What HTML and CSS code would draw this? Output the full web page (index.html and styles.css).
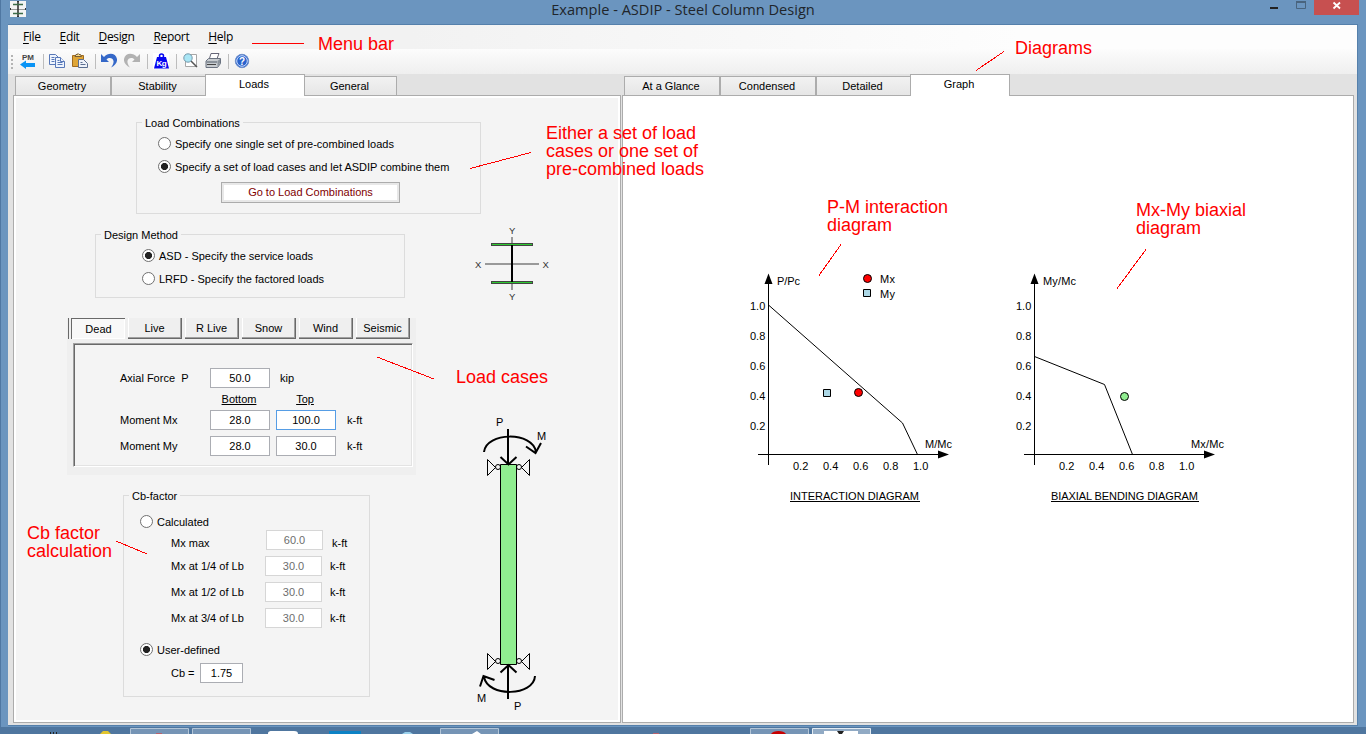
FILE: index.html
```html
<!DOCTYPE html>
<html lang="en">
<head>
<meta charset="utf-8">
<title>Example - ASDIP - Steel Column Design</title>
<link rel="stylesheet" href="styles.css">
</head>
<body>
<div class="window">
  <header class="titlebar">
    <svg class="app-icon" width="16" height="16" viewBox="0 0 16 16"><path fill="#f4f4f4" d="M0 0h16v16H0z"/><path stroke="#999" d="M0 8.5h16"/><path stroke="#333" stroke-width="1.6" d="M8 1v14"/><path stroke="#3d6b48" stroke-width="1.6" d="M3 3.5h10M3 12.5h10"/><path fill="#333" d="M7 0h2v1H7zM7 15h2v1H7zM0 7h1v2H0zM15 7h1v2h-1z"/></svg>
    <h1 class="title">Example - ASDIP - Steel Column Design</h1>
    <div class="controls">
      <svg width="36" height="15" viewBox="0 0 36 15"><path fill="#222" d="M0 7h8v2H0z"/><path fill="none" stroke="#49647e" d="M26.5 1.500h9v7h-9z"/><path fill="#49647e" d="M26 1h10v2H26z"/></svg>
      <div class="close"><svg width="45" height="15" viewBox="0 0 45 15"><path stroke="#fff" stroke-width="1.800" d="M19.500 2.500l6.500 6M26 2.500l-6.500 6"/></svg></div>
    </div>
  </header>
  <div class="client">
    <nav class="menu"><span><u>F</u>ile</span><span><u>E</u>dit</span><span><u>D</u>esign</span><span><u>R</u>eport</span><span><u>H</u>elp</span></nav>
    <div class="toolbar">
      <svg class="grip" width="2" height="16" viewBox="0 0 2 16"><path fill="#b4b4b4" d="M0 1h2v2H0zM0 5h2v2H0zM0 9h2v2H0zM0 13h2v2H0z"/></svg>
      <svg class="tool" viewBox="0 0 16 16"><text class="pm" x="2" y="6.500">PM</text><path fill="#0a94f5" d="M0 11.500l6-4v2.500h9v4H6v2z"/></svg>
      <i class="sep"></i>
      <svg class="tool" viewBox="0 0 16 16"><g fill="#eef4fd" stroke="#5878b8"><path d="M.5 1.500h6l3 3v7h-9z"/><path d="M2.500 4.500h3M2.500 6.500h3M2.500 8.500h3"/><path d="M6.500 4.500h5l4 4v6h-9z"/><path d="M11.500 4.500v4h4M8.500 7.500h2M8.500 9.500h5M8.500 11.500h5"/></g></svg>
      <svg class="tool" viewBox="0 0 16 16"><path fill="#dfa637" stroke="#a06b20" d="M.5 2.500h11v11H.5z"/><path fill="#f7dc8a" stroke="#755b35" d="M3 3.500l1-2h1.500L6 .5l1 1h1.500l1 2z"/><path fill="#eef2fa" stroke="#5c6f91" d="M6.500 6.500h5l4 4v4h-9z"/><path stroke="#5c6f91" d="M8.500 9.500h2M8.500 11.500h5"/></svg>
      <i class="sep"></i>
      <svg class="tool" viewBox="0 0 16 16"><path fill="#3568c8" d="M0 1v8h8L5.500 6.500C8 4 12 5 12.500 8c.3 2.500-1 4.500-2.500 6.500 4-2 6.500-5 6-8.500C15 0 7.500-1 3 4z"/></svg>
      <svg class="tool" viewBox="0 0 16 16"><path fill="#b2b2b2" d="M16 1v8H8l2.500-2.500C8 4 4 5 3.500 8c-.3 2.500 1 4.500 2.500 6.500C2 12.500-.5 9.500 0 6 1 0 8.500-1 13 4z"/></svg>
      <i class="sep"></i>
      <svg class="tool" viewBox="0 0 16 16"><path fill="#fff" d="M0 0h16v16H0z"/><circle cx="8.500" cy="3" r="2" fill="none" stroke="#0505f0" stroke-width="1.500"/><path fill="#0505f0" d="M4 4h9l3 11.500H1z"/><text class="kg" x="3.500" y="12.500">Kg</text></svg>
      <i class="sep"></i>
      <svg class="tool" viewBox="0 0 16 16"><path fill="#fff" stroke="#a7a7a7" d="M3.500 1.500h11v12h-11z"/><path stroke="#555" stroke-width="1.500" d="M9 8l6 6"/><circle cx="6" cy="5" r="4.200" fill="#a9e6f5" stroke="#7798aa"/></svg>
      <svg class="tool" viewBox="0 0 16 16"><path fill="#fff" stroke="#667" d="M6 .5h8L11.500 7H4z"/><path fill="#c8ccd0" stroke="#6a7280" d="M1 8l2.500-2.500h12v5l-3 4H1z"/><path fill="#8a929b" d="M1 8h11v2H1zM12.500 8L15 6v4l-2.500 4z"/><path stroke="#444" d="M2 11.500h9"/></svg>
      <i class="sep"></i>
      <svg class="tool" viewBox="0 0 16 16"><circle cx="8" cy="8" r="6.700" fill="#2a63cc" stroke="#6f8fc9"/><circle cx="8" cy="8" r="5.300" fill="none" stroke="#cfe0ff"/><text class="q" x="5" y="11.500">?</text></svg>
    </div>
    <main class="panes">
      <section class="pane pane-left">
        <div class="tabs"><span class="tab t1">Geometry</span><span class="tab t2">Stability</span><span class="tab active">Loads</span><span class="tab t4">General</span></div>
        <div class="page form">
          <div class="group combos">
            <div class="legend">Load Combinations</div>
            <div class="opt"><i class="radio"></i>Specify one single set of pre-combined loads</div>
            <div class="opt"><i class="radio on"></i>Specify a set of load cases and let ASDIP combine them</div>
            <div class="go">Go to Load Combinations</div>
          </div>
          <div class="lower">
            <div class="fields">
              <div class="group method">
                <div class="legend">Design Method</div>
                <div class="opt"><i class="radio on"></i>ASD - Specify the service loads</div>
                <div class="opt"><i class="radio"></i>LRFD - Specify the factored loads</div>
              </div>
              <div class="cases">
                <div class="casetabs"><span class="case sel">Dead</span><span class="case">Live</span><span class="case">R Live</span><span class="case">Snow</span><span class="case">Wind</span><span class="case">Seismic</span></div>
                <div class="casebox">
                  <div class="row"><span>Axial Force&nbsp; P</span><b class="in">50.0</b><span class="kip">kip</span></div>
                  <div class="row heads"><span></span><u>Bottom</u><u>Top</u></div>
                  <div class="row"><span>Moment Mx</span><b class="in">28.0</b><b class="in focus">100.0</b><span class="unit">k-ft</span></div>
                  <div class="row my"><span>Moment My</span><b class="in">28.0</b><b class="in">30.0</b><span class="unit">k-ft</span></div>
                </div>
              </div>
              <div class="group cb">
                <div class="legend">Cb-factor</div>
                <div class="opt"><i class="radio"></i>Calculated</div>
                <div class="cbrow first"><span>Mx max</span><b class="in off">60.0</b><span>k-ft</span></div>
                <div class="cbrow"><span>Mx at 1/4 of Lb</span><b class="in off">30.0</b><span>k-ft</span></div>
                <div class="cbrow"><span>Mx at 1/2 of Lb</span><b class="in off">30.0</b><span>k-ft</span></div>
                <div class="cbrow"><span>Mx at 3/4 of Lb</span><b class="in off">30.0</b><span>k-ft</span></div>
                <div class="opt user"><i class="radio on"></i>User-defined</div>
                <div class="cbval"><span>Cb =</span><b class="in">1.75</b></div>
              </div>
            </div>
            <div class="figures">
              <svg width="100" height="90" viewBox="465 220 100 90">
                <path stroke="#999" stroke-width="2" d="M512 237v53M485 264h54"/>
                <path fill="#444" d="M491 243h42v3h-42zM491 281h42v3h-42z"/>
                <path fill="#2dc930" d="M492 244h40v1h-40zM492 282h40v1h-40z"/>
                <path stroke="#000" stroke-width="2" d="M512 245v37"/>
                <g class="axis"><text x="509" y="234">Y</text><text x="509" y="299.500">Y</text><text x="475" y="268">X</text><text x="542.500" y="268">X</text></g>
              </svg>
              <svg class="column" width="100" height="310" viewBox="465 405 100 310">
                <path fill="#90ee90" stroke="#000" d="M500.500 464.500h16v200h-16z"/>
                <g fill="none" stroke="#000" stroke-width="2">
                  <path d="M508 429v35M500.500 457l8 7.500 8-7.500"/>
                  <path d="M484 452c2-20 49-21 52 0M526 446.500l9.500 6.500 5.500-10"/>
                  <path d="M508 699v-34M500.500 672.500l8-7.500 8 7.500"/>
                  <path d="M484 677c4 21 50 19 51-1M480 686.500l3.500-10.500 11 4"/>
                </g>
                <g id="pins" fill="none" stroke="#000"><path d="M487.500 459.500v16l8-8z"/><circle cx="498" cy="467" r="2.500"/><circle cx="519" cy="467" r="2.500"/><path d="M529.500 459.500v16l-8-8z"/></g>
                <use href="#pins" y="194"/>
                <g class="gtext"><text x="496" y="426">P</text><text x="537" y="440">M</text><text x="477" y="702">M</text><text x="514" y="710">P</text></g>
              </svg>
            </div>
          </div>
        </div>
      </section>
      <section class="pane pane-right">
        <div class="tabs"><span class="tab g1">At a Glance</span><span class="tab g2">Condensed</span><span class="tab g3">Detailed</span><span class="tab active">Graph</span></div>
        <div class="page graph">
          <svg width="226" height="245" viewBox="740 265 226 245">
            <g id="axes"><path fill="none" stroke="#000" d="M768.500 280v185M758 454.500h185"/><path d="M768.500 273.500l4 10.500h-8zM949 454.500l-11-4v8z"/>
            <g class="gtext"><text x="750" y="310">1.0</text><text x="750" y="340">0.8</text><text x="750" y="370">0.6</text><text x="750" y="400">0.4</text><text x="750" y="430">0.2</text><text x="793" y="470">0.2</text><text x="823" y="470">0.4</text><text x="853" y="470">0.6</text><text x="883" y="470">0.8</text><text x="913" y="470">1.0</text></g></g>
            <path fill="none" stroke="#000" d="M768.500 305l134 118 15 31.500"/>
            <circle cx="867.500" cy="278.500" r="4" fill="red" stroke="#000"/><circle cx="858.500" cy="392.500" r="4" fill="red" stroke="#000"/>
            <path fill="#add8e6" stroke="#000" d="M863.500 289.500h7v7h-7zM823.500 389.500h7v7h-7z"/>
            <g class="gtext"><text x="777" y="285" textLength="23">P/Pc</text><text x="880" y="283" textLength="15">Mx</text><text x="880" y="298" textLength="15">My</text><text x="925" y="448" textLength="27">M/Mc</text><text x="790" y="500" textLength="129">INTERACTION DIAGRAM</text></g>
            <path stroke="#000" d="M790 501.500h130"/>
          </svg>
          <svg width="226" height="245" viewBox="1006 265 226 245">
            <use href="#axes" x="266"/>
            <path fill="none" stroke="#000" d="M1034.500 356.500l70 28 28 70"/>
            <circle cx="1124.500" cy="396.500" r="4" fill="#90ee90" stroke="#000"/>
            <g class="gtext"><text x="1043" y="285" textLength="33">My/Mc</text><text x="1191" y="448" textLength="33">Mx/Mc</text><text x="1051" y="500" textLength="147">BIAXIAL BENDING DIAGRAM</text></g>
            <path stroke="#000" d="M1051 501.500h148"/>
          </svg>
        </div>
      </section>
    </main>
  </div>
</div>
<footer class="taskbar">
  <svg width="1366" height="7" viewBox="0 0 1366 7">
    <g fill="#7594b5" stroke="#b3c5d7"><path d="M130.500 7.500v-6h58v6zM192.500 7.500v-6h58v6zM440.500 7.500v-6h58v6zM750.500 7.500v-6h58v6z"/><path fill="#91aac4" stroke="#e3ebf2" d="M812.500 7.500v-6h58v6z"/></g>
    <path fill="#fff" d="M268 7c0-3 2-3 4-3h22c3 0 4 1 4 3zM472 7l5-3 4 3zM824 4h34v3h-34z"/>
    <path fill="#0c82c5" d="M329 4h32v3h-32z"/><path fill="#e2c52d" d="M100 7l3-3h5l3 3z"/><path fill="#9ad1ec" d="M402 7l3-2h5l3 2z"/>
    <path fill="#c80000" d="M771 7c2-4 13-4 15 0z"/><path fill="#222" d="M837 4h7l-2 3h-3zM50 5h1v2h-1zM53 5h1v2h-1zM56 5h1v2h-1z"/>
    <path fill="#b7616d" d="M156 6h6v1h-6zM653 6h6v1h-6z"/>
  </svg>
</footer>
<svg class="callouts" width="1366" height="734" viewBox="0 0 1366 734">
  <path fill="none" stroke="red" shape-rendering="crispEdges" d="M252 43.500h52M1004 51.500l-28 19M531 152.500l-61 16M841 244.500l-22 31M1146 249.500l-29 39M377 357l57 22M116 541l31 13"/>
  <text x="318" y="50">Menu bar</text><text x="1015" y="54">Diagrams</text>
  <text x="546" y="139">Either a set of load</text><text x="546" y="157">cases or one set of</text><text x="546" y="175">pre-combined loads</text>
  <text x="827" y="213">P-M interaction</text><text x="827" y="231">diagram</text>
  <text x="1136" y="216">Mx-My biaxial</text><text x="1136" y="234">diagram</text>
  <text x="456" y="383">Load cases</text><text x="27" y="539">Cb factor</text><text x="27" y="557">calculation</text>
</svg>
</body>
</html>
```
FILE: styles.css
```css
* { box-sizing: border-box; }
body { margin: 0; width: 1366px; height: 734px; overflow: hidden; position: relative; background: #4f769f; font: 11px/16px "Liberation Sans", Arial, sans-serif; color: #000; }
svg { display: block; flex: none; }
.window { height: 727px; padding: 0 8px 0 7px; background: #6b95bf; border-left: 1px solid #4f77a2; }
.titlebar { height: 24px; display: flex; align-items: flex-start; }
.app-icon { margin: 1px 0 0 2px; }
.title { flex: 1; margin: 0; padding-left: 69px; text-align: center; font: 14.6px/19px "Open Sans", "Noto Sans", sans-serif; color: #20252b; }
.controls { display: flex; width: 89px; margin: 0 -1px; gap: 8px; }
.close { width: 45px; height: 15px; background: #c75050; }
.client { height: 702px; border: solid #5580ab; border-width: 1px 1px 1px 0; background: #e2e2e2; }
.menu { height: 24px; display: flex; padding: 4px 0 0 15px; gap: 19px; background: linear-gradient(90deg, #f2f2f2 30%, #fdfdfd 75%); font: 12px/16px "Open Sans", "Noto Sans", sans-serif; letter-spacing: -0.35px; }
.menu u { text-underline-offset: 2px; }
.toolbar { height: 25px; display: flex; align-items: center; padding-left: 3px; background: linear-gradient(#fcfcfc, #efefef); }
.grip { margin-right: 7px; }
.tool { width: 16px; height: 16px; margin-right: 7px; position: relative; top: -1px; }
.sep { width: 1px; height: 15px; margin-right: 5px; background: #bdbdbd; }
.pm { font: bold 8px "Liberation Sans", sans-serif; fill: #444; }
.kg { font: bold 8px "Liberation Sans", sans-serif; fill: #fff; letter-spacing: -0.5px; }
.q { font: bold 10px "Liberation Sans", sans-serif; fill: #fff; }
.panes { display: flex; height: 648px; padding-left: 5px; gap: 1px; }
.pane-left { width: 608px; }
.pane-right { width: 732px; }
.tabs { height: 21px; display: flex; align-items: flex-end; padding-left: 2px; }
.tab { height: 19px; border: 1px solid #acacac; border-bottom: 0; padding: 1px 2px 0 0; text-align: center; background: linear-gradient(#f2f2f2, #e6e6e6); }
.tab.active { width: 100px; height: 22px; margin: 0 -1px -1px; background: #fff; position: relative; }
.t1, .g1, .g2 { width: 96px; }
.t2, .g3 { width: 95px; }
.t4 { width: 93px; }
.page { height: 628px; border: 1px solid #acacac; background: #fff; }
.form { background: #f4f4f4; box-shadow: inset 0 0 0 2px #fff; padding: 26px 0 0 81px; }
.group { border: 1px solid #dcdcdc; }
.legend { width: max-content; height: 16px; margin: -8px 0 0 5px; padding: 0 3px; background: #f4f4f4; }
.opt { height: 23px; display: flex; align-items: center; gap: 4px; }
.radio { width: 13px; height: 13px; border: 1px solid #707070; border-radius: 50%; background: #fff; }
.radio.on { background: radial-gradient(circle, #222 3.2px, #fff 3.9px); }
.combos { width: 345px; height: 92px; margin-left: 41px; }
.combos .opt { margin-left: 21px; }
.combos .legend + .opt { margin-top: 1px; }
.go { width: 179px; height: 21px; margin: 4px 0 0 84px; border: 1px solid #acacac; box-shadow: inset 0 0 0 2px #e8e8e8; background: #fff; text-align: center; line-height: 18px; color: #800000; }
.lower { display: flex; }
.fields { width: 370px; padding-top: 20px; }
.method { width: 310px; height: 64px; }
.method .opt { margin-left: 46px; }
.method .legend + .opt { margin-top: 1px; }
.cases { width: 349px; height: 157px; margin: 20px 0 0 -28px; background: #efefef; }
.casetabs { display: flex; gap: 3px; padding-left: 2px; border-left: 1px solid #696969; height: 21px; margin-left: 1px; }
.case { width: 54px; height: 21px; border: solid #696969; border-width: 0 1px 1px 0; box-shadow: inset -1px -1px #a0a0a0, inset 1px 0 #fff; text-align: center; line-height: 20px; }
.case.sel { border-width: 1px 0 0 1px; background: #f8f8f8; box-shadow: inset -1px -1px #fff; }
.casebox { width: 340px; height: 124px; margin: 4px 0 0 6px; padding: 24px 0 0 45px; border: 1px solid #fff; border-left-color: #a0a0a0; border-top-color: #a0a0a0; box-shadow: inset 1px 1px #696969, inset -1px -1px #e3e3e3; background: #f4f4f4; }
.row { display: grid; grid-template-columns: 84px 60px 60px 30px; column-gap: 6px; align-items: center; height: 20px; margin-left: 1px; }
.row > .unit { margin-left: 5px; }
.row > .kip { margin-left: 4px; }
.heads { height: 22px; text-align: center; }
.heads u { margin-right: 2px; }
.my { margin-top: 6px; }
.in { display: block; height: 20px; border: 1px solid #abadb3; background: #fff; font-weight: normal; text-align: center; line-height: 18px; }
.focus { border-color: #569de5; }
.off { border-color: #d6d6d6; color: #6d6d6d; }
.cb { width: 247px; height: 202px; margin: 20px 0 0 28px; }
.cb .opt { margin-left: 16px; }
.cb .legend + .opt { margin-top: 6px; }
.cbrow { display: grid; grid-template-columns: 94px 57px 30px; height: 20px; margin: 6px 0 0 47px; align-items: center; }
.cbrow span:last-child { margin-left: 8px; }
.cbrow.first { margin: -4px 0 7px 47px; grid-template-columns: 95px 57px 30px; }
.cbrow.first span { padding-top: 6px; }
.cbrow.first span:last-child { margin-left: 9px; }
.cbrow.first + .cbrow { margin-top: 0; }
.cb .user { margin-top: 10px; }
.cbval { display: flex; margin: 2px 0 0 47px; align-items: center; }
.cbval span { width: 29px; }
.cbval .in { width: 43px; }
.figures { padding-top: 6px; }
.column { margin-top: 95px; }
.graph { display: flex; gap: 40px; padding: 169px 0 0 117px; }
.gtext { font: 11px "Liberation Sans", sans-serif; }
.axis { font: 9.500px "Liberation Sans", sans-serif; fill: #333; }
.taskbar { height: 7px; background: #4f769f; }
.callouts { position: absolute; left: 0; top: 0; pointer-events: none; font: 18px "Liberation Sans", Arial, sans-serif; fill: red; }
```
